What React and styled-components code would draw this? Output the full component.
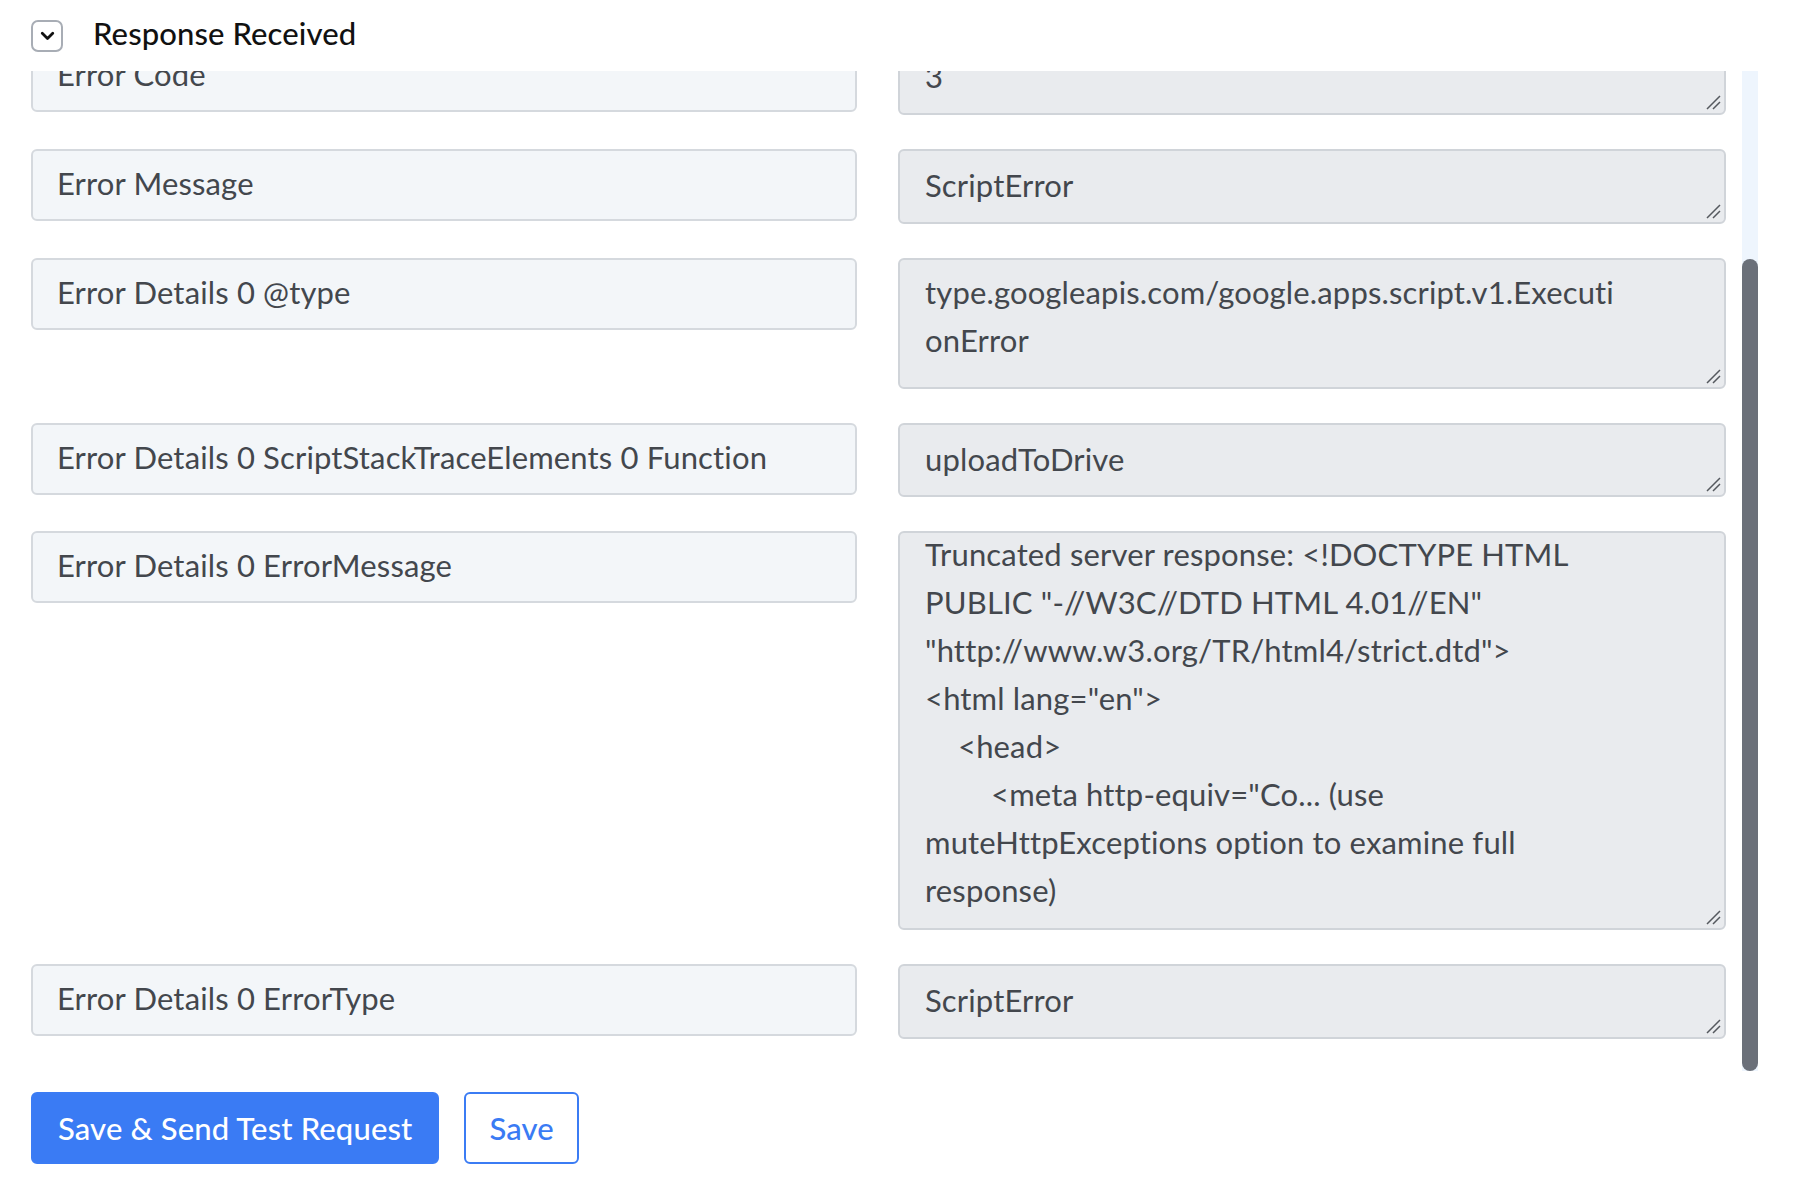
import React from "react";
import styled, { createGlobalStyle } from "styled-components";

const GlobalStyle = createGlobalStyle`
  html, body {
    margin: 0;
    padding: 0;
    background: #ffffff;
  }

  body {
    font-family: Lato, "Noto Sans", "Liberation Sans", sans-serif;
    color: #43474d;
  }

  * {
    box-sizing: border-box;
  }
`;

const fields = [
  { label: "Error Code", lines: ["3"], height: 75, pad: 10 },
  { label: "Error Message", lines: ["ScriptError"], height: 75, pad: 10 },
  {
    label: "Error Details 0 @type",
    lines: ["type.googleapis.com/google.apps.script.v1.Executi", "onError"],
    height: 131,
    pad: 8,
  },
  {
    label: "Error Details 0 ScriptStackTraceElements 0 Function",
    lines: ["uploadToDrive"],
    height: 74,
    pad: 10,
  },
  {
    label: "Error Details 0 ErrorMessage",
    lines: [
      'Truncated server response: <!DOCTYPE HTML',
      'PUBLIC "-//W3C//DTD HTML 4.01//EN"',
      '"http://www.w3.org/TR/html4/strict.dtd">',
      '<html lang="en">',
      { text: "<head>", indent: 33 },
      { text: '<meta http-equiv="Co... (use', indent: 66 },
      "muteHttpExceptions option to examine full",
      "response)",
    ],
    height: 399,
    pad: 0,
    offset: -3,
  },
  { label: "Error Details 0 ErrorType", lines: ["ScriptError"], height: 75, pad: 10 },
];

const Page = styled.div`
  width: 1796px;
  min-height: 1202px;
`;

const Header = styled.div`
  height: 71px;
  display: flex;
  align-items: center;
  gap: 30px;
  padding-left: 31px;
`;

const Toggle = styled.button`
  width: 32px;
  height: 32px;
  padding: 0;
  display: flex;
  align-items: center;
  justify-content: center;
  background: #ffffff;
  border: 2px solid #a8adb5;
  border-radius: 7px;
  color: #111111;
`;

const Title = styled.h3`
  margin: 0 0 5px;
  font-size: 31px;
  font-weight: 500;
  color: #111111;
  letter-spacing: 0.1px;
`;

const ScrollArea = styled.div`
  margin-left: 31px;
  width: 1727px;
  height: 1000px;
  display: flex;
`;

const Viewport = styled.div`
  flex: 1;
  height: 100%;
  overflow: hidden;
  padding: 201px 16px 32px 0;
`;

const Track = styled.div`
  width: 16px;
  height: 100%;
  display: flex;
  flex-direction: column;
  justify-content: flex-end;
  background: #eef5fd;
`;

const Thumb = styled.div`
  height: ${(p) => p.$size}px;
  background: #6b7079;
  border-radius: 8px;
`;

const FieldGrid = styled.div`
  display: grid;
  grid-template-columns: 826px 828px;
  column-gap: 41px;
  row-gap: 34px;
  align-items: start;
`;

const LabelBox = styled.div`
  height: 72px;
  display: flex;
  align-items: center;
  padding: 0 24px 4px;
  background: #f3f6f9;
  border: 2px solid #d5d9de;
  border-radius: 6px;
  font-size: 31px;
  letter-spacing: 0.15px;
  color: #43474d;
  white-space: nowrap;
`;

const ValueBox = styled.div`
  position: relative;
  height: ${(p) => p.$height}px;
  padding: ${(p) => p.$pad}px 25px 0;
  background: #e9ebee;
  border: 2px solid #d0d4d9;
  border-radius: 6px;
  font-size: 31px;
  letter-spacing: 0.15px;
  line-height: 48px;
  color: #43474d;
  overflow: hidden;
`;

const Lines = styled.div`
  margin-top: ${(p) => p.$offset || 0}px;
`;

const Line = styled.div`
  padding-left: ${(p) => p.$indent || 0}px;
  white-space: pre;
`;

const Grip = styled.svg`
  position: absolute;
  right: 3px;
  bottom: 3px;
`;

const Actions = styled.div`
  display: flex;
  gap: 25px;
  padding: 21px 0 0 31px;
`;

const Button = styled.button`
  height: 72px;
  padding: 0 ${(p) => (p.$outline ? 23 : 25)}px;
  font-family: Lato, "Noto Sans", sans-serif;
  font-size: 31px;
  font-weight: 500;
  letter-spacing: 0.15px;
  border-radius: 6px;
  border: 2px solid #3b7cf4;
  background: ${(p) => (p.$outline ? "#ffffff" : "#3a7bf4")};
  color: ${(p) => (p.$outline ? "#3a7bf4" : "#ffffff")};
`;

const ChevronIcon = () => (
  <svg width="21" height="21" viewBox="0 0 24 24" fill="none">
    <path
      d="M6 9.5l6 6 6-6"
      stroke="currentColor"
      strokeWidth="3.2"
      strokeLinecap="round"
      strokeLinejoin="round"
    />
  </svg>
);

const ResizeGrip = () => (
  <Grip width="16" height="16" viewBox="0 0 16 16">
    <path d="M2 15L15 2M8 15L15 8" stroke="#55595f" strokeWidth="1.5" />
  </Grip>
);

const FieldRow = ({ field }) => (
  <>
    <LabelBox>{field.label}</LabelBox>
    <ValueBox $height={field.height} $pad={field.pad}>
      <Lines $offset={field.offset}>
        {field.lines.map((line, i) =>
          typeof line === "string" ? (
            <Line key={i}>{line}</Line>
          ) : (
            <Line key={i} $indent={line.indent}>
              {line.text}
            </Line>
          )
        )}
      </Lines>
      <ResizeGrip />
    </ValueBox>
  </>
);

const App = () => {
  const viewRef = React.useRef(null);

  React.useLayoutEffect(() => {
    const el = viewRef.current;
    if (el) el.scrollTop = el.scrollHeight;
  }, []);

  return (
    <Page>
      <GlobalStyle />
      <Header>
        <Toggle>
          <ChevronIcon />
        </Toggle>
        <Title>Response Received</Title>
      </Header>
      <ScrollArea>
        <Viewport ref={viewRef}>
          <FieldGrid>
            {fields.map((field) => (
              <FieldRow key={field.label} field={field} />
            ))}
          </FieldGrid>
        </Viewport>
        <Track>
          <Thumb $size={812} />
        </Track>
      </ScrollArea>
      <Actions>
        <Button>Save &amp; Send Test Request</Button>
        <Button $outline>Save</Button>
      </Actions>
    </Page>
  );
};

export default App;
